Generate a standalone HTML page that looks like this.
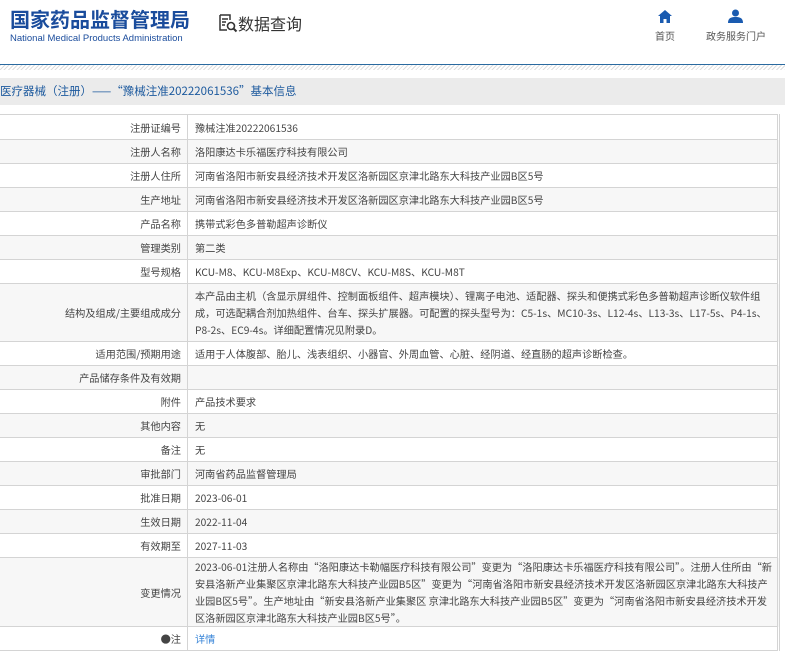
<!DOCTYPE html>
<html><head><meta charset="utf-8"><style>
*{margin:0;padding:0;box-sizing:border-box}
body{width:785px;height:658px;background:#fff;font-family:"Noto Sans CJK SC","Liberation Sans",sans-serif;position:relative;overflow:hidden;color:#333}
.logo{position:absolute;left:10px;top:6px;font-size:20px;line-height:26px;font-weight:bold;color:#1a4c9c;font-family:"Noto Sans CJK SC",sans-serif}
.en{position:absolute;left:10px;top:33px;font-size:9.5px;line-height:12px;color:#1a4c9c;font-family:"Liberation Sans",sans-serif}
.sj{position:absolute;left:218px;top:11px;font-size:16px;line-height:24px;color:#333}
.nav{position:absolute;top:28px;font-size:10px;color:#555}
.line{position:absolute;left:0;top:64px;width:785px;height:1px;background:#2a6aa0}
.hatch{position:absolute;left:0;top:65px;width:785px;height:5px;background:repeating-linear-gradient(135deg,#ddd 0 1px,#fff 1px 3px)}
.bar{position:absolute;left:0;top:78px;width:785px;height:27px;background:#ebebeb;color:#1d5a9e;font-size:11.5px;line-height:27px}
table{position:absolute;left:-1px;top:114px;width:781px;border-collapse:collapse;font-size:10.2px;border-right:3px double #d4d4d4}
td{border:1px solid #d4d4d4;line-height:17px;vertical-align:middle}
td.l{width:188px;text-align:right;padding-right:6px;color:#444}
td.v{padding:0 5px 0 7px;color:#444}
tr{height:24px}
tr:nth-child(even){background:#f7f7f7}
</style></head><body>
<div class="logo">国家药品监督管理局</div>
<div class="en">National Medical Products Administration</div>
<div class="sj"><svg width="20" height="20" viewBox="0 0 20 20" style="vertical-align:-3px"><path d="M2 2h10v5M2 2v15h7M4 6h6M4 9h4M4 12h3" stroke="#333" stroke-width="1.5" fill="none"/><circle cx="13" cy="13" r="3.5" stroke="#333" stroke-width="1.6" fill="none"/><path d="M15.5 15.5l3 3" stroke="#333" stroke-width="2"/></svg>数据查询</div>
<svg style="position:absolute;left:658px;top:10px" width="14" height="13" viewBox="0 0 14 13"><path d="M7 0L0 6h2v7h3.5V9h3v4H12V6h2z" fill="#1a5bb0"/></svg>
<div class="nav" style="left:655px">首页</div>
<svg style="position:absolute;left:728px;top:9px" width="15" height="14" viewBox="0 0 15 14"><circle cx="7.5" cy="4" r="3.5" fill="#1a5bb0"/><path d="M0 14c0-5 3-6 7.5-6s7.5 1 7.5 6z" fill="#1a5bb0"/></svg>
<div class="nav" style="left:706px">政务服务门户</div>
<div class="line"></div><div class="hatch"></div>
<div class="bar">医疗器械（注册）——“豫械注准20222061536”基本信息</div>
<table>
<tr style="height:25px"><td class="l">注册证编号</td><td class="v">豫械注准20222061536</td></tr>
<tr><td class="l">注册人名称</td><td class="v">洛阳康达卡乐福医疗科技有限公司</td></tr>
<tr><td class="l">注册人住所</td><td class="v">河南省洛阳市新安县经济技术开发区洛新园区京津北路东大科技产业园B区5号</td></tr>
<tr><td class="l">生产地址</td><td class="v">河南省洛阳市新安县经济技术开发区洛新园区京津北路东大科技产业园B区5号</td></tr>
<tr><td class="l">产品名称</td><td class="v">携带式彩色多普勒超声诊断仪</td></tr>
<tr><td class="l">管理类别</td><td class="v">第二类</td></tr>
<tr><td class="l">型号规格</td><td class="v">KCU-M8、KCU-M8Exp、KCU-M8CV、KCU-M8S、KCU-M8T</td></tr>
<tr style="height:58px"><td class="l">结构及组成/主要组成成分</td><td class="v">本产品由主机（含显示屏组件、控制面板组件、超声模块）、锂离子电池、适配器、探头和便携式彩色多普勒超声诊断仪软件组成，可选配耦合剂加热组件、台车、探头扩展器。可配置的探头型号为：C5-1s、MC10-3s、L12-4s、L13-3s、L17-5s、P4-1s、P8-2s、EC9-4s。详细配置情况见附录D。</td></tr>
<tr><td class="l">适用范围/预期用途</td><td class="v">适用于人体腹部、胎儿、浅表组织、小器官、外周血管、心脏、经阴道、经直肠的超声诊断检查。</td></tr>
<tr><td class="l">产品储存条件及有效期</td><td class="v"></td></tr>
<tr><td class="l">附件</td><td class="v">产品技术要求</td></tr>
<tr><td class="l">其他内容</td><td class="v">无</td></tr>
<tr><td class="l">备注</td><td class="v">无</td></tr>
<tr><td class="l">审批部门</td><td class="v">河南省药品监督管理局</td></tr>
<tr><td class="l">批准日期</td><td class="v">2023-06-01</td></tr>
<tr><td class="l">生效日期</td><td class="v">2022-11-04</td></tr>
<tr><td class="l">有效期至</td><td class="v">2027-11-03</td></tr>
<tr style="height:69px"><td class="l">变更情况</td><td class="v">2023-06-01注册人名称由“洛阳康达卡勒幅医疗科技有限公司”变更为“洛阳康达卡乐福医疗科技有限公司”。注册人住所由“新安县洛新产业集聚区京津北路东大科技产业园B5区”变更为“河南省洛阳市新安县经济技术开发区洛新园区京津北路东大科技产业园B区5号”。生产地址由“新安县洛新产业集聚区 京津北路东大科技产业园B5区”变更为“河南省洛阳市新安县经济技术开发区洛新园区京津北路东大科技产业园B区5号”。</td></tr>
<tr style="height:24px;background:#fff"><td class="l">●注</td><td class="v" style="color:#3a86d8">详情</td></tr>
</table>
</body></html>
